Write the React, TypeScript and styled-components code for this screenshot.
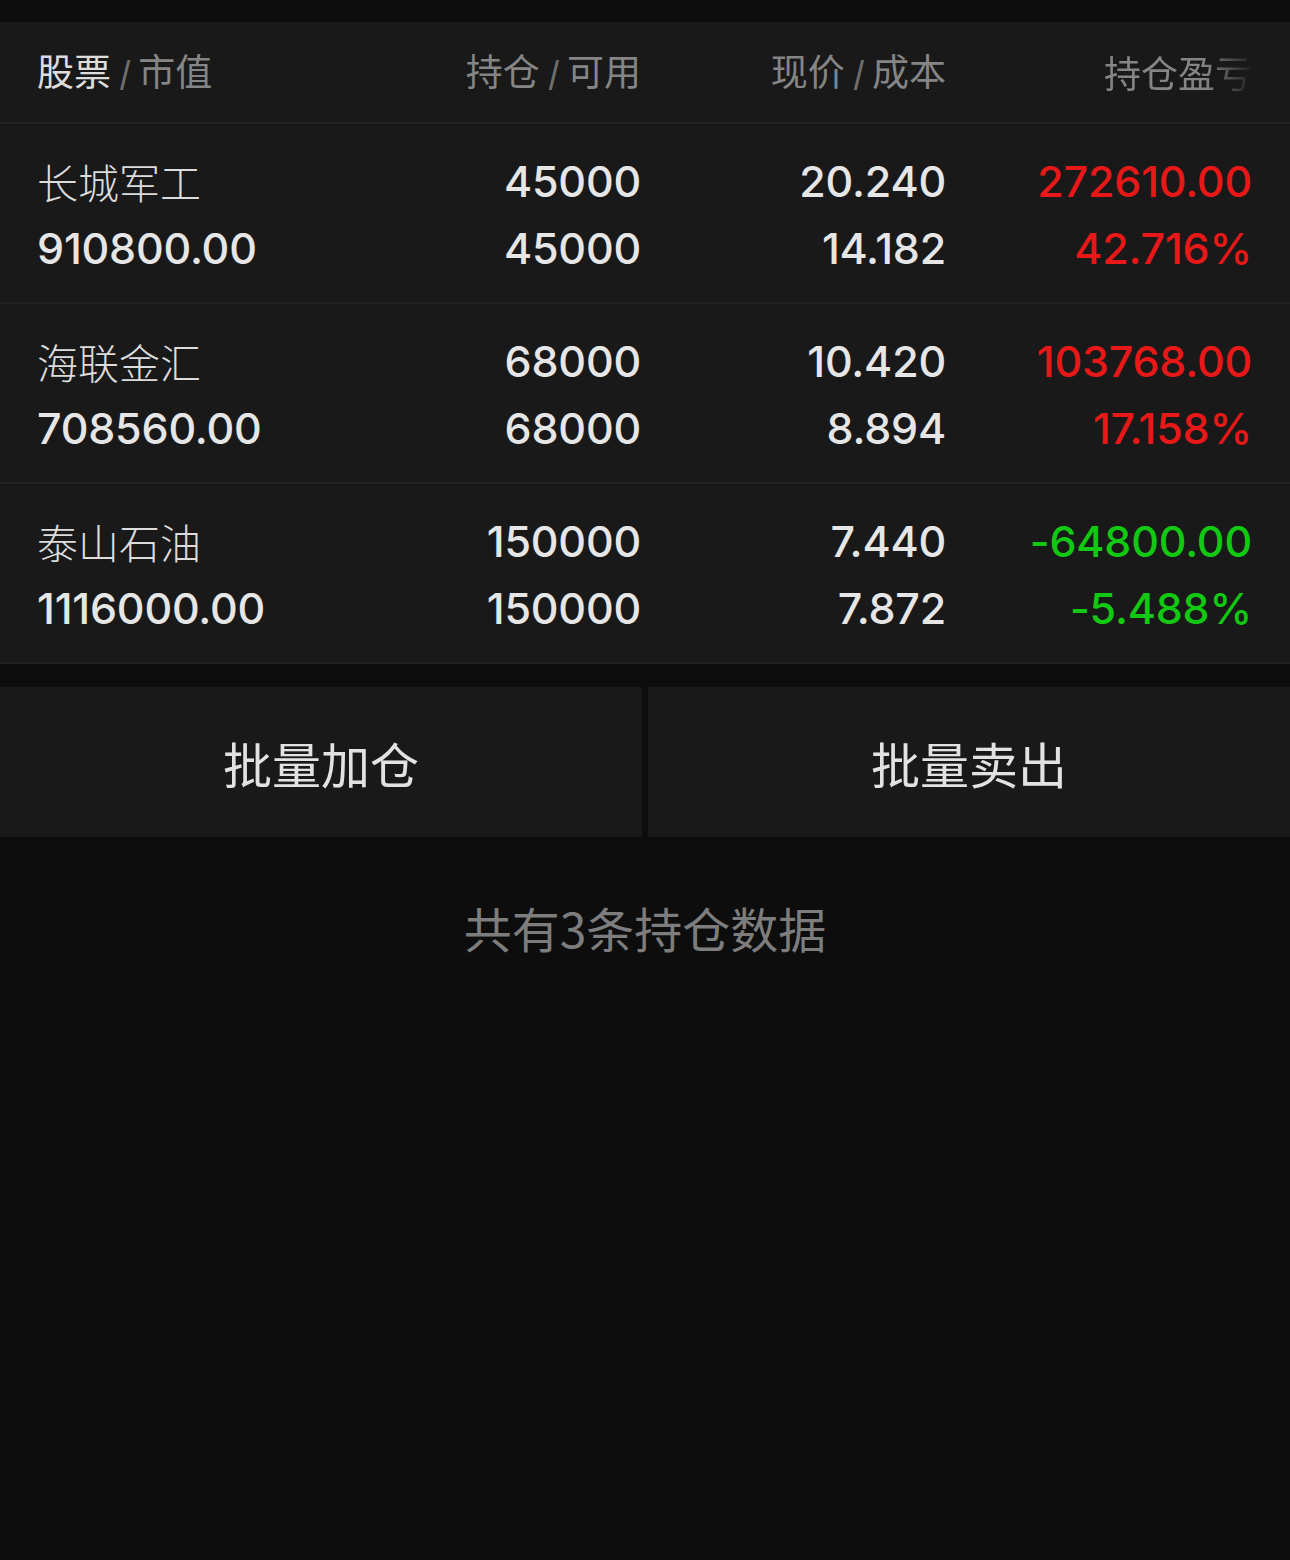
import React from "react";
import styled, { createGlobalStyle } from "styled-components";

const GlobalStyle = createGlobalStyle`
  html, body {
    margin: 0;
    padding: 0;
    background: #0d0d0d;
  }
  body {
    font-family: "Noto Sans CJK SC", "Noto Sans", sans-serif;
    -webkit-font-smoothing: antialiased;
  }
`;

const Page = styled.div`
  width: 1290px;
  min-height: 1560px;
  background: #0d0d0d;
  padding-top: 22px;
  box-sizing: border-box;
`;

const Grid = styled.div`
  display: grid;
  grid-template-columns: 300px 304px 305px 306px;
  padding: 0 38px 0 37px;
  background: #191919;
  border-bottom: 2px solid #232323;
`;

const HeaderRow = styled(Grid)`
  height: 100px;
  align-items: center;
`;

const HeadCell = styled.div<{ $align?: "left" | "right" }>`
  text-align: ${(p) => p.$align ?? "right"};
  font-family: "Noto Sans CJK SC", sans-serif;
  font-size: 37px;
  font-weight: 400;
  color: #858585;
  line-height: 1;
  white-space: nowrap;
`;

const Strong = styled.span`
  color: #dddddd;
`;

const Slash = styled.span`
  display: inline-block;
  margin: 0 8px 0 9px;
  font-family: "Liberation Sans", sans-serif;
  font-weight: 400;
  color: #6e6e6e;
  transform: translateY(3px) scaleY(1.1);
`;

const Fade = styled.span`
  -webkit-mask-image: linear-gradient(to right, #000 68%, rgba(0, 0, 0, 0.05) 100%);
  mask-image: linear-gradient(to right, #000 68%, rgba(0, 0, 0, 0.05) 100%);
`;

const DataRow = styled(Grid)`
  height: 180px;
  padding-top: 24px;
  box-sizing: border-box;
  align-content: start;
`;

const Cell = styled.div<{ $align?: "left" | "right" }>`
  display: flex;
  flex-direction: column;
  align-items: ${(p) => (p.$align === "left" ? "flex-start" : "flex-end")};
`;

const Line = styled.div<{ $color?: string; $cjk?: boolean }>`
  height: 67px;
  line-height: 67px;
  white-space: nowrap;
  font-family: ${(p) =>
    p.$cjk
      ? '"Noto Sans CJK SC", sans-serif'
      : 'Inter, Roboto, "Liberation Sans", sans-serif'};
  font-size: ${(p) => (p.$cjk ? "41px" : "43px")};
  letter-spacing: ${(p) => (p.$cjk ? "0" : "-0.2px")};
  font-weight: ${(p) => (p.$cjk ? 300 : 500)};
  color: ${(p) => (p.$cjk ? "#dcdcdc" : p.$color ?? "#e6e6e6")};
`;

const Spacer = styled.div`
  height: 23px;
`;

const Buttons = styled.div`
  display: grid;
  grid-template-columns: 642px 642px;
  column-gap: 6px;
`;

const ActionButton = styled.button`
  height: 150px;
  border: none;
  margin: 0;
  padding: 0;
  background: #191919;
  color: #e2e2e2;
  font-family: "Noto Sans CJK SC", sans-serif;
  font-size: 49px;
  font-weight: 400;
  cursor: pointer;
`;

const Footer = styled.div`
  padding-top: 60px;
  text-align: center;
  font-family: "Noto Sans CJK SC", sans-serif;
  font-size: 48px;
  font-weight: 400;
  color: #7d7d7d;
  line-height: 60px;
`;

const RED = "#e81818";
const GREEN = "#12c812";

type Pos = {
  name: string;
  value: string;
  hold: string;
  avail: string;
  price: string;
  cost: string;
  pl: string;
  pct: string;
  up: boolean;
};

const data: Pos[] = [
  { name: "长城军工", value: "910800.00", hold: "45000", avail: "45000", price: "20.240", cost: "14.182", pl: "272610.00", pct: "42.716%", up: true },
  { name: "海联金汇", value: "708560.00", hold: "68000", avail: "68000", price: "10.420", cost: "8.894", pl: "103768.00", pct: "17.158%", up: true },
  { name: "泰山石油", value: "1116000.00", hold: "150000", avail: "150000", price: "7.440", cost: "7.872", pl: "-64800.00", pct: "-5.488%", up: false },
];

export default function App() {
  return (
    <Page>
      <GlobalStyle />
      <HeaderRow>
        <HeadCell $align="left">
          <Strong>股票</Strong>
          <Slash>/</Slash>市值
        </HeadCell>
        <HeadCell>
          持仓<Slash>/</Slash>可用
        </HeadCell>
        <HeadCell>
          现价<Slash>/</Slash>成本
        </HeadCell>
        <HeadCell>
          <Fade>持仓盈亏</Fade>
        </HeadCell>
      </HeaderRow>
      {data.map((d) => {
        const c = d.up ? RED : GREEN;
        return (
          <DataRow key={d.name}>
            <Cell $align="left">
              <Line $cjk>{d.name}</Line>
              <Line>{d.value}</Line>
            </Cell>
            <Cell>
              <Line>{d.hold}</Line>
              <Line>{d.avail}</Line>
            </Cell>
            <Cell>
              <Line>{d.price}</Line>
              <Line>{d.cost}</Line>
            </Cell>
            <Cell>
              <Line $color={c}>{d.pl}</Line>
              <Line $color={c}>{d.pct}</Line>
            </Cell>
          </DataRow>
        );
      })}
      <Spacer />
      <Buttons>
        <ActionButton>批量加仓</ActionButton>
        <ActionButton>批量卖出</ActionButton>
      </Buttons>
      <Footer>共有3条持仓数据</Footer>
    </Page>
  );
}
